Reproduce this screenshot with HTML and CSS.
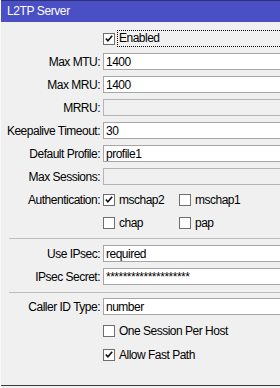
FILE: index.html
```html
<!DOCTYPE html>
<html>
<head>
  <title>L2TP Server</title>
  <link rel="stylesheet" href="styles.css">
</head>
<body>
  <div class="window">
    <div class="titlebar">L2TP Server</div>
    <div class="form">
      <!-- Enabled -->
      <div class="row check-row first">
        <span class="label"></span>
        <span class="box checked"><svg width="11" height="11" viewBox="0 0 11 11"><polyline points="2,5.5 4.3,8 9,2.5" /></svg></span>
        <span class="focus">Enabled</span>
      </div>

      <div class="row"><span class="label">Max MTU:</span><input class="field" type="text" value="1400"></div>
      <div class="row"><span class="label">Max MRU:</span><input class="field" type="text" value="1400"></div>
      <div class="row"><span class="label">MRRU:</span><input class="field" type="text" disabled></div>
      <div class="row"><span class="label">Keepalive Timeout:</span><input class="field" type="text" value="30"></div>
      <div class="row"><span class="label">Default Profile:</span><input class="field" type="text" value="profile1"></div>
      <div class="row"><span class="label">Max Sessions:</span><input class="field" type="text" disabled></div>

      <!-- Authentication -->
      <div class="row check-row">
        <span class="label">Authentication:</span>
        <span class="opt">
          <span class="box checked"><svg width="11" height="11" viewBox="0 0 11 11"><polyline points="2,5.5 4.3,8 9,2.5" /></svg></span>
          <span>mschap2</span>
        </span>
        <span class="opt">
          <span class="box"></span>
          <span>mschap1</span>
        </span>
      </div>
      <div class="row check-row">
        <span class="label"></span>
        <span class="opt">
          <span class="box"></span>
          <span>chap</span>
        </span>
        <span class="opt">
          <span class="box"></span>
          <span>pap</span>
        </span>
      </div>

      <div class="sep"></div>

      <div class="row"><span class="label">Use IPsec:</span><input class="field" type="text" value="required"></div>
      <div class="row"><span class="label">IPsec Secret:</span><input class="field" type="text" value="********************"></div>

      <div class="sep sep2"></div>

      <div class="row"><span class="label">Caller ID Type:</span><input class="field" type="text" value="number"></div>
      <div class="row check-row loose">
        <span class="label"></span>
        <span class="box"></span>
        <span class="text">One Session Per Host</span>
      </div>
      <div class="row check-row loose">
        <span class="label"></span>
        <span class="box checked"><svg width="11" height="11" viewBox="0 0 11 11"><polyline points="2,5.5 4.3,8 9,2.5" /></svg></span>
        <span class="text">Allow Fast Path</span>
      </div>
    </div>
  </div>
</body>
</html>
```

FILE: styles.css
```css
html, body {
  margin: 0;
  padding: 0;
  overflow: hidden;
  background-color: #f0f0f0;
}
* {
  font-family: 'Liberation Sans', Arial, sans-serif;
  box-sizing: border-box;
}
.window {
  height: 388px;
  background-color: #f0f0f0;
  border-left: 1px solid #fafafa;
  position: relative;
}
.window::after {
  content: '';
  position: absolute;
  left: 0;
  right: 0;
  top: 385px;
  height: 2px;
  border-top: 1px solid #3c3c3c;
  border-bottom: 1px solid #9a9a9a;
}
.titlebar {
  height: 22px;
  border-top: 1px solid #2f3170;
  background-color: #4b4fc6;
  color: #fff;
  font-size: 12px;
  letter-spacing: -0.4px;
  line-height: 20px;
  padding-left: 6px;
}
/* 폼 영역 */
.form {
  display: flex;
  flex-direction: column;
}
.row {
  display: flex;
  align-items: center;
  height: 17px;
  margin-top: 6px;
  font-size: 12px;
  letter-spacing: -0.5px;
  color: #000;
}
.row.first {
  margin-top: 8px;
}
.label {
  width: 102px;
  flex: none;
  text-align: right;
  padding-right: 3px;
  white-space: nowrap;
}
.field {
  flex: 1;
  min-width: 0;
  height: 17px;
  margin: 0;
  padding: 0 2px;
  border: 1px solid #a6a6a6;
  border-right: none;
  background-color: #fff;
  font-size: 12px;
  letter-spacing: -0.5px;
  color: #000;
  outline: none;
}
.field:disabled {
  background-color: #f0f0f0;
  border-color: #b4b4b4;
}
.box {
  width: 12px;
  height: 12px;
  flex: none;
  border: 1px solid #6f6f6f;
  background-color: #fff;
  display: flex;
  align-items: center;
  justify-content: center;
  margin-right: 4px;
}
.box svg polyline {
  fill: none;
  stroke: #111;
  stroke-width: 1.8;
}
.focus {
  flex: 1;
  height: 17px;
  line-height: 15px;
  border: 1px dotted #000;
  border-right: none;
  padding-left: 1px;
  margin-left: -2px;
}
.opt {
  display: flex;
  align-items: center;
  width: 76px;
}
.sep {
  height: 1px;
  margin: 7px 0 6px 8px;
  background-color: #bdbdbd;
}
.sep + .row {
  margin-top: 0;
}
.sep2 {
  margin-top: 7px;
  margin-bottom: 5px;
}
.row.loose {
  margin-top: 7px;
}
```
